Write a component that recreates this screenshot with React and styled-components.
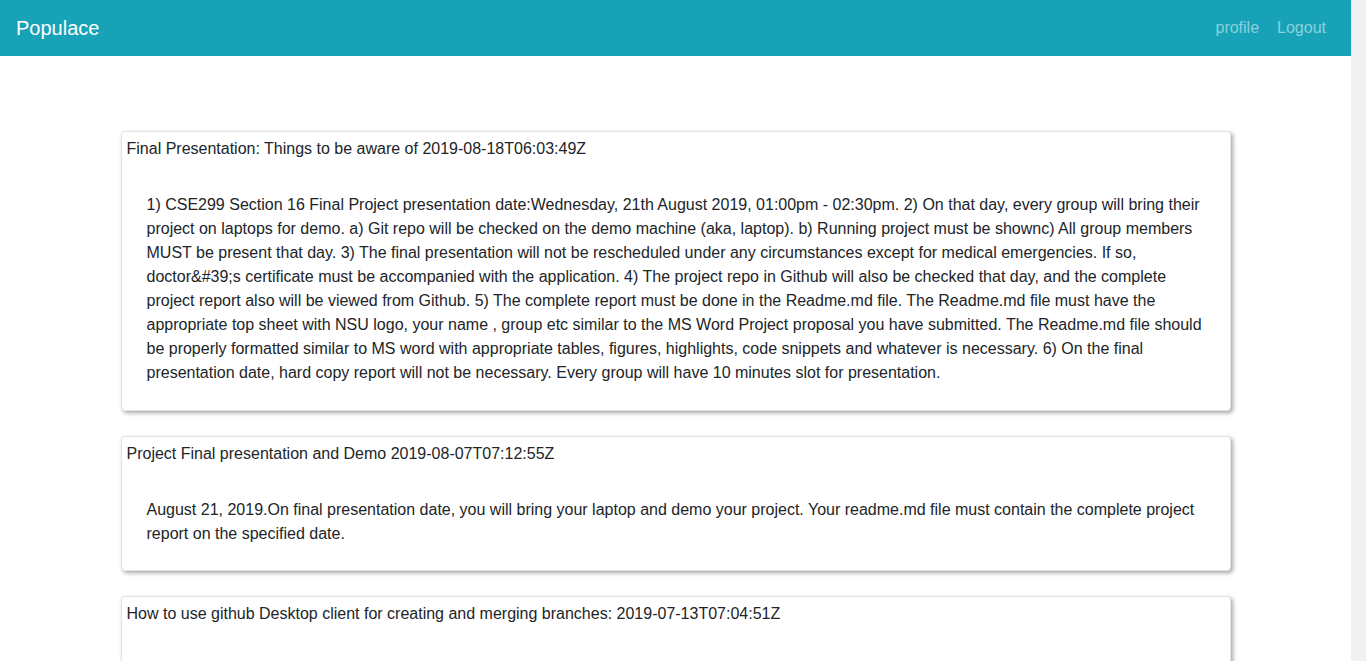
import styled, { createGlobalStyle } from 'styled-components';

const posts = [
  {
    title: 'Final Presentation: Things to be aware of',
    date: '2019-08-18T06:03:49Z',
    body: '1) CSE299 Section 16 Final Project presentation date:Wednesday, 21th August 2019, 01:00pm - 02:30pm. 2) On that day, every group will bring their project on laptops for demo. a) Git repo will be checked on the demo machine (aka, laptop). b) Running project must be shownc) All group members MUST be present that day. 3) The final presentation will not be rescheduled under any circumstances except for medical emergencies. If so, doctor&#39;s certificate must be accompanied with the application. 4) The project repo in Github will also be checked that day, and the complete project report also will be viewed from Github. 5) The complete report must be done in the Readme.md file. The Readme.md file must have the appropriate top sheet with NSU logo, your name , group etc similar to the MS Word Project proposal you have submitted. The Readme.md file should be properly formatted similar to MS word with appropriate tables, figures, highlights, code snippets and whatever is necessary. 6) On the final presentation date, hard copy report will not be necessary. Every group will have 10 minutes slot for presentation.',
  },
  {
    title: 'Project Final presentation and Demo',
    date: '2019-08-07T07:12:55Z',
    body: 'August 21, 2019.On final presentation date, you will bring your laptop and demo your project. Your readme.md file must contain the complete project report on the specified date.',
  },
  {
    title: 'How to use github Desktop client for creating and merging branches:',
    date: '2019-07-13T07:04:51Z',
    body: 'Watch the video tutorial shared in the class group to learn how to create a new branch, commit your changes, push them to Github and merge the branch into master using the Github Desktop client.',
  },
];

function App() {
  return (
    <>
      <GlobalStyle />
      <NavBar>
        <Brand href="#">Populace</Brand>
        <NavLinks>
          <NavLink href="#">profile</NavLink>
          <NavLink href="#">Logout</NavLink>
        </NavLinks>
      </NavBar>
      <Container>
        {posts.map((post) => (
          <Card key={post.date}>
            <CardTitle>
              {post.title} {post.date}
            </CardTitle>
            <CardBody>{post.body}</CardBody>
          </Card>
        ))}
      </Container>
    </>
  );
}

export default App;

// the reference was shot with a classic 15px scrollbar gutter on the right
const GlobalStyle = createGlobalStyle`
  *, *::before, *::after {
    box-sizing: border-box;
  }
  html {
    background: #f1f1f1;
  }
  body {
    margin: 0;
    width: calc(100% - 15px);
    font-family: "Liberation Sans", Arial, sans-serif;
    font-size: 16px;
    line-height: 1.5;
    color: #212529;
    background: #fff;
  }
`

const NavBar = styled.nav`
  height: 56px;
  display: flex;
  align-items: center;
  justify-content: space-between;
  padding: 8px 17px 8px 16px;
  background: #17a2b8;
`
const Brand = styled.a`
  font-size: 20px;
  line-height: 30px;
  color: #fff;
  text-decoration: none;
`
const NavLinks = styled.div`
  display: flex;
  gap: 2px;
`
const NavLink = styled.a`
  padding: 8px;
  font-size: 16px;
  color: rgba(255, 255, 255, 0.5);
  text-decoration: none;
`
const Container = styled.div`
  max-width: 1140px;
  margin: 0 auto;
  padding: 75px 15px 40px;
  display: flex;
  flex-direction: column;
  gap: 25px;
`
const Card = styled.div`
  padding: 5px 5px 4px;
  border: 1px solid #e3e3e3;
  border-radius: 4px;
  background: #fff;
  box-shadow: 2px 2px 4px rgba(0, 0, 0, 0.35);
`
const CardTitle = styled.div`
  line-height: 24px;
`
const CardBody = styled.div`
  margin-top: 32px;
  padding: 0 20px 20.5px;
  line-height: 24px;
`
